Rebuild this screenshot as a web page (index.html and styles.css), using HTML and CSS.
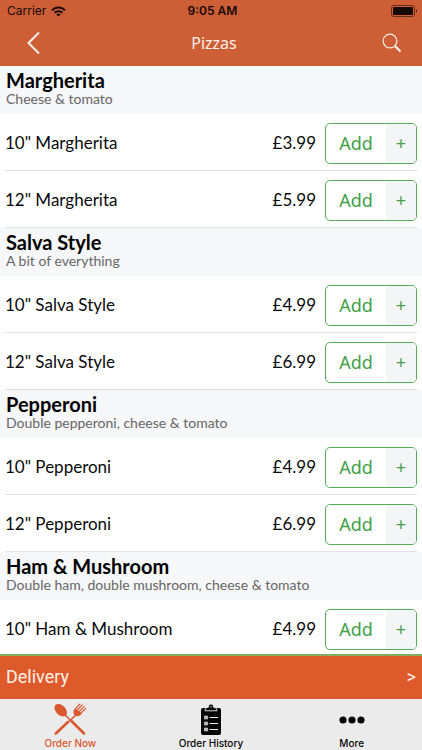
FILE: index.html
```html
<!DOCTYPE html>
<html lang="en">
<head>
<meta charset="utf-8">
<meta name="viewport" content="width=device-width, initial-scale=1">
<title>Pizzas</title>
<link rel="stylesheet" href="styles.css">
</head>
<body>
<header class="top">
  <div class="status">
    <span class="carrier">Carrier
      <svg width="15" height="11" viewBox="0 0 15 11" aria-hidden="true"><g fill="none" stroke="currentColor" stroke-width="2"><path d="M1 4.2C4.6.6 10.4.6 14 4.2"/><path d="M3.500 6.800c2.300-2.200 5.700-2.200 8 0"/></g><path d="M5.400 8.400c1.200-1.100 3-1.100 4.200 0L7.500 10.600z" fill="currentColor"/></svg>
    </span>
    <span class="clock">9:05 AM</span>
    <svg class="battery" width="27" height="12" viewBox="0 0 27 12" aria-hidden="true"><rect x=".5" y=".5" width="23" height="11" rx="2.500" fill="none" stroke="currentColor" stroke-opacity=".55"/><rect x="2" y="2" width="20" height="8" rx="1" fill="currentColor"/><path d="M25 4c1.500.6 1.500 3.400 0 4z" fill="currentColor" fill-opacity=".6"/></svg>
  </div>
  <nav class="navbar">
    <button class="icon-button" aria-label="Back"><svg width="14" height="24" viewBox="0 0 14 24"><path d="M13 1.500 2.500 12 13 22.500" fill="none" stroke="currentColor" stroke-width="2"/></svg></button>
    <h1>Pizzas</h1>
    <button class="icon-button search" aria-label="Search"><svg width="20" height="20" viewBox="0 0 20 20"><circle cx="8" cy="8" r="6.900" fill="none" stroke="currentColor" stroke-width="1.200"/><path d="m13 13 5.500 5.500" stroke="currentColor" stroke-width="2.200"/></svg></button>
  </nav>
</header>
<main class="menu">
  <section>
    <div class="heading"><h2>Margherita</h2><p>Cheese &amp; tomato</p></div>
    <ul>
      <li><span class="name">10" Margherita</span><span class="price">£3.99</span><button class="add"><span>Add</span><i>+</i></button></li>
      <li><span class="name">12" Margherita</span><span class="price">£5.99</span><button class="add"><span>Add</span><i>+</i></button></li>
    </ul>
  </section>
  <section>
    <div class="heading"><h2>Salva Style</h2><p>A bit of everything</p></div>
    <ul>
      <li><span class="name">10" Salva Style</span><span class="price">£4.99</span><button class="add"><span>Add</span><i>+</i></button></li>
      <li><span class="name">12" Salva Style</span><span class="price">£6.99</span><button class="add"><span>Add</span><i>+</i></button></li>
    </ul>
  </section>
  <section>
    <div class="heading"><h2>Pepperoni</h2><p>Double pepperoni, cheese &amp; tomato</p></div>
    <ul>
      <li><span class="name">10" Pepperoni</span><span class="price">£4.99</span><button class="add"><span>Add</span><i>+</i></button></li>
      <li><span class="name">12" Pepperoni</span><span class="price">£6.99</span><button class="add"><span>Add</span><i>+</i></button></li>
    </ul>
  </section>
  <section>
    <div class="heading"><h2>Ham &amp; Mushroom</h2><p>Double ham, double mushroom, cheese &amp; tomato</p></div>
    <ul>
      <li><span class="name">10" Ham &amp; Mushroom</span><span class="price">£4.99</span><button class="add"><span>Add</span><i>+</i></button></li>
    </ul>
  </section>
</main>
<button class="delivery"><span>Delivery</span><span class="chevron">&gt;</span></button>
<nav class="tabs">
  <a class="active" href="#order">
    <svg width="34" height="33" viewBox="0 0 34 33" aria-hidden="true"><g stroke="currentColor" stroke-linecap="round" fill="none"><path d="M12 12 20 19.500" stroke-width="1.600"/><path d="M19 18.500 31 30.500" stroke-width="2.600"/><path d="M24 11 15 19.500" stroke-width="1.600"/><path d="M2.800 30.500 15 19" stroke-width="2.600"/><path d="m24.300 7 4.900-5M26.300 8.500l4.900-4.800M22.500 5.500l4.500-4.500M28 10l4.700-4.500" stroke-width="1.100"/></g><path d="M8 7.500C6 5.500 5 3.500 1.500 2z" fill="currentColor"/><ellipse cx="7.700" cy="7.200" rx="7.300" ry="4.900" transform="rotate(45 7.700 7.200)" fill="currentColor"/><path d="M22 5.200 28.800 10.500c-1.800 3-5.300 3.500-7.300 1.500-1.700-1.700-1.300-4.800.5-6.800z" fill="currentColor"/></svg>
    <span>Order Now</span>
  </a>
  <a href="#history">
    <svg width="20" height="31" viewBox="0 0 20 31" aria-hidden="true"><path d="M2 4h16a2 2 0 0 1 2 2v23a2 2 0 0 1-2 2H2a2 2 0 0 1-2-2V6a2 2 0 0 1 2-2z" fill="currentColor"/><path d="M4 6.800c0-2.600 1.500-3.500 3.300-3.500C7.500 1 8.500 0 10 0s2.500 1 2.700 3.300c1.800 0 3.300.9 3.300 3.500z" fill="currentColor" stroke="#ebebeb" stroke-width=".9"/><circle cx="10" cy="2.800" r=".7" fill="#ebebeb"/><path d="M3.500 12h3v3h-3zm0 6h3v3h-3zm0 6h3v3h-3z" fill="#aaa" stroke="#ebebeb" stroke-width=".6"/><path d="M8.500 13.500H17M8.500 19.500H17M8.500 25.500H17" stroke="#ebebeb" stroke-width="1"/></svg>
    <span>Order History</span>
  </a>
  <a href="#more">
    <svg width="26" height="8" viewBox="0 0 26 8" aria-hidden="true"><g fill="currentColor"><circle cx="4" cy="4" r="3.600"/><circle cx="13" cy="4" r="3.600"/><circle cx="22" cy="4" r="3.600"/></g></svg>
    <span>More</span>
  </a>
</nav>
</body>
</html>
```
FILE: styles.css
```css
* { box-sizing: border-box; }
body {
  margin: 0;
  height: 100vh;
  display: flex;
  flex-direction: column;
  overflow: hidden;
  background: #fff;
  color: #0a0a0a;
  font-family: Lato, "Open Sans", sans-serif;
}
h1, h2, p, ul { margin: 0; padding: 0; }
button {
  margin: 0;
  padding: 0;
  border: 0;
  background: none;
  color: inherit;
  font: inherit;
  cursor: pointer;
}
svg { display: block; }

.top { flex: none; background: #ce5e36; }
.status {
  display: grid;
  grid-template-columns: 1fr auto 1fr;
  align-items: center;
  height: 22px;
  padding: 0 4px 0 7px;
  color: #160a06;
  font: 12px/22px Inter, sans-serif;
}
.carrier { display: flex; align-items: center; gap: 5px; }
.clock { font-weight: 600; }
.battery { justify-self: end; }
.navbar {
  display: grid;
  grid-template-columns: 1fr auto 1fr;
  align-items: center;
  height: 44px;
  padding: 0 20px 2px 26px;
  color: #fff1ea;
}
.navbar h1 { font: 400 16px/20px "Noto Sans", sans-serif; }
.icon-button { justify-self: start; }
.icon-button.search { justify-self: end; }

.menu { flex: 1; min-height: 0; overflow: hidden; }
.heading { height: 48px; padding: 3px 6px 0; background: #f6f7f9; }
.heading h2 { font-size: 20px; line-height: 22px; font-weight: 700; color: #000; }
.heading p { font-size: 14px; line-height: 16px; color: #666; }
.menu ul { list-style: none; padding: 0 5px; }
.menu li {
  display: flex;
  align-items: center;
  height: 57px;
  padding-top: 2px;
  border-bottom: 1px solid #e2e2e4;
  font-size: 17px;
}
.name, .price { padding-bottom: 2px; }
.name { flex: 1; }
.price { margin-right: 9px; }
.add {
  display: flex;
  width: 92px;
  height: 41px;
  border: 1px solid #55ad5b;
  border-radius: 5px;
  overflow: hidden;
  color: #43a047;
  font: 18px/39px "Noto Sans", sans-serif;
}
.add span { flex: 1; }
.add i { width: 30px; background: #f4f5f7; font-style: normal; }

.delivery {
  flex: none;
  display: flex;
  align-items: center;
  justify-content: space-between;
  height: 45px;
  padding: 0 6px 2px;
  border-top: 2px solid #83ad62;
  background: #df5a2b;
  color: #fff0e8;
  font: 18px/24px Roboto, sans-serif;
}
.tabs {
  flex: none;
  display: grid;
  grid-template-columns: repeat(3, 1fr);
  height: 51px;
  background: #ebebeb;
}
.tabs a {
  display: grid;
  grid-template-rows: 1fr 12px;
  place-items: center;
  padding: 3px 0 1px;
  color: #050505;
  font: 500 10px/12px Inter, sans-serif;
  text-decoration: none;
}
.tabs .active { color: #d9592f; }
```
